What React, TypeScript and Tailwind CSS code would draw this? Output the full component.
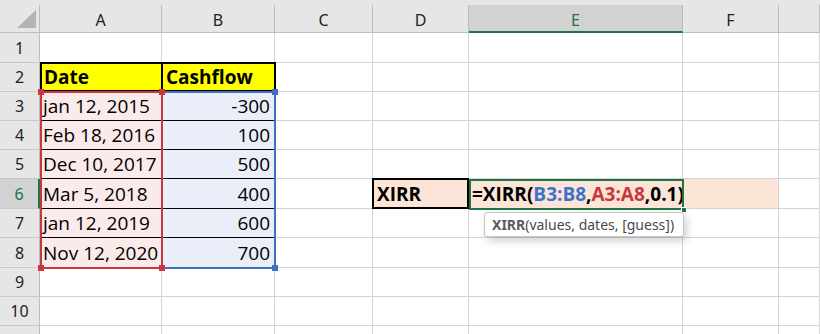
import React from "react";

const grid =
  "grid grid-cols-[40px_122px_113px_98px_96px_214px_96px_1fr] grid-rows-[5px_28px_30px_29px_29px_29px_29px_30px_29px_30px_29px_29px_1fr]";

const columns = ["A", "B", "C", "D", "E", "F", ""];

type Row = { n: number; a?: string; b?: string; d?: string; formula?: boolean };

const rows: Row[] = [
  { n: 1 },
  { n: 2, a: "Date", b: "Cashflow" },
  { n: 3, a: "jan 12, 2015", b: "-300" },
  { n: 4, a: "Feb 18, 2016", b: "100" },
  { n: 5, a: "Dec 10, 2017", b: "500" },
  { n: 6, a: "Mar 5, 2018", b: "400", d: "XIRR", formula: true },
  { n: 7, a: "jan 12, 2019", b: "600" },
  { n: 8, a: "Nov 12, 2020", b: "700" },
  { n: 9 },
  { n: 10 },
];

const cellText = "font-['Open_Sans',sans-serif] text-[19px] leading-[26px] text-black whitespace-nowrap";

function colCell(n: number, col: number) {
  const inTable = n >= 3 && n <= 8;
  const blackBottom = n >= 3 && n <= 7;
  if (col === 0) {
    // column A
    if (n === 2) return `flex items-center pl-[4px] border-r border-b border-r-[#d4d4d4] border-b-[#d4d4d4] bg-[#ffff00] font-bold ${cellText}`;
    if (inTable)
      return `flex items-center pl-[3px] border-r border-b border-r-[#d4d4d4] ${blackBottom ? "border-b-black" : "border-b-[#d4d4d4]"} bg-[#fbeaea] ${cellText}`;
  }
  if (col === 1) {
    if (n === 2) return `flex items-center pl-[4px] border-r border-b border-r-[#d4d4d4] border-b-[#d4d4d4] bg-[#ffff00] font-bold ${cellText}`;
    if (inTable)
      return `flex items-center justify-end pr-[4px] border-r border-b border-r-[#d4d4d4] ${blackBottom ? "border-b-black" : "border-b-[#d4d4d4]"} bg-[#e9eef8] ${cellText}`;
  }
  if (n === 6 && col === 3) return `flex items-center pl-[4px] border-r border-b border-r-[#d4d4d4] border-b-[#d4d4d4] bg-[#fce4d6] font-bold ${cellText}`;
  if (n === 6 && col === 4) return `flex items-center pl-[3px] border-r border-b border-r-[#d4d4d4] border-b-[#d4d4d4] bg-[#fce4d6] font-bold ${cellText}`;
  if (n === 6 && col === 5) return "border-r border-b border-r-[#d4d4d4] border-b-[#d4d4d4] bg-[#fce4d6]";
  return `flex items-center border-r border-b border-r-[#d4d4d4] border-b-[#d4d4d4] ${cellText}`;
}

function Formula() {
  return (
    <span>
      =XIRR(<span className="text-[#3d73cc]">B3:B8</span>,<span className="text-[#c8373d]">A3:A8</span>,0.1)
    </span>
  );
}

function Handle({ pos, color }: { pos: string; color: string }) {
  return <div className={`absolute w-[6px] h-[6px] ${pos} ${color}`} />;
}

export default function App() {
  return (
    <div className="relative w-[820px] h-[334px] overflow-hidden bg-white">
      <div className={grid + " h-full"}>
        {/* strip above headers */}
        <div className="col-span-8 bg-[#e6e6e6]" />

        {/* corner */}
        <div className="bg-[#e6e6e6] border-r border-b border-[#bdbdbd]">
          <svg width="39" height="27" viewBox="0 0 39 27">
            <polygon points="17,23 36,23 36,5" fill="#b4b4b4" />
          </svg>
        </div>
        {columns.map((c) => (
          <div
            key={c || "G"}
            className={
              c === "E"
                ? "flex items-center justify-center pt-[3px] bg-[#d2d2d2] border-r border-r-[#bdbdbd] border-b-2 border-b-[#217346] font-['Noto_Sans',sans-serif] text-[16px] text-[#217346]"
                : "flex items-center justify-center pt-[3px] bg-[#e6e6e6] border-r border-b border-[#bdbdbd] font-['Noto_Sans',sans-serif] text-[16px] text-[#222]"
            }
          >
            {c}
          </div>
        ))}

        {rows.map((r) => (
          <React.Fragment key={r.n}>
            <div
              className={
                r.n === 6
                  ? "flex items-center justify-center bg-[#d2d2d2] border-r-2 border-b border-r-[#217346] border-b-[#c8c8c8] font-['Noto_Sans',sans-serif] text-[16px] text-[#217346]"
                  : "flex items-center justify-center bg-[#e6e6e6] border-r border-b border-r-[#bdbdbd] border-b-[#c8c8c8] font-['Noto_Sans',sans-serif] text-[16px] text-[#222]"
              }
            >
              {r.n}
            </div>
            <div className={colCell(r.n, 0)}>{r.a}</div>
            <div className={colCell(r.n, 1)}>{r.b}</div>
            <div className={colCell(r.n, 2)} />
            <div className={colCell(r.n, 3)}>{r.d}</div>
            <div className={colCell(r.n, 4)}>{r.formula && <Formula />}</div>
            <div className={colCell(r.n, 5)} />
            <div className={colCell(r.n, 6)} />
          </React.Fragment>
        ))}

        {/* partial row below row 10 */}
        <div className="bg-[#e6e6e6] border-r border-r-[#bdbdbd]" />
        <div className="border-r border-r-[#d4d4d4]" />
        <div className="border-r border-r-[#d4d4d4]" />
        <div className="border-r border-r-[#d4d4d4]" />
        <div className="border-r border-r-[#d4d4d4]" />
        <div className="border-r border-r-[#d4d4d4]" />
        <div className="border-r border-r-[#d4d4d4]" />
        <div className="border-r border-r-[#d4d4d4]" />
      </div>

      {/* borders and range highlights drawn over the cells */}
      <div className={grid + " absolute inset-0 pointer-events-none"}>
        <div className="col-start-2 row-start-4 -mt-px -mr-px border-2 border-black" />
        <div className="col-start-3 row-start-4 -mt-px -ml-px -mr-px border-2 border-black" />
        <div className="col-start-5 row-start-8 -mt-px -ml-px border-2 border-black" />

        <div className="relative col-start-3 row-start-5 row-end-11 -mt-px -ml-px -mr-px -mb-px border-2 border-[#3d6fc6]">
          <Handle pos="-left-[4px] -top-[4px]" color="bg-[#3d6fc6]" />
          <Handle pos="-right-[4px] -top-[4px]" color="bg-[#3d6fc6]" />
          <Handle pos="-left-[4px] -bottom-[4px]" color="bg-[#3d6fc6]" />
          <Handle pos="-right-[4px] -bottom-[4px]" color="bg-[#3d6fc6]" />
        </div>
        <div className="relative col-start-2 row-start-5 row-end-11 -mt-px -mr-px -mb-px border-2 border-[#c8373d]">
          <Handle pos="-left-[4px] -top-[4px]" color="bg-[#c8373d]" />
          <Handle pos="-right-[4px] -top-[4px]" color="bg-[#c8373d]" />
          <Handle pos="-left-[4px] -bottom-[4px]" color="bg-[#c8373d]" />
          <Handle pos="-right-[4px] -bottom-[4px]" color="bg-[#c8373d]" />
        </div>

        <div className="relative col-start-6 row-start-8 -mr-px -mb-px border-2 border-[#217346]">
          <div className="absolute -right-[5px] -bottom-[5px] w-[6px] h-[6px] bg-[#217346] border border-white" />
          <div className="absolute left-[13px] top-[31px] h-[25px] w-[200px] flex items-center px-[7px] bg-white border border-[#c6c6c6] rounded-[3px] shadow-[3px_4px_8px_rgba(0,0,0,0.18)] font-['Noto_Sans',sans-serif] text-[14px] text-[#4a4a4a] whitespace-nowrap">
            <span className="font-bold text-[#5a5a5a]">XIRR</span>(values, dates, [guess])
          </div>
        </div>
      </div>
    </div>
  );
}
